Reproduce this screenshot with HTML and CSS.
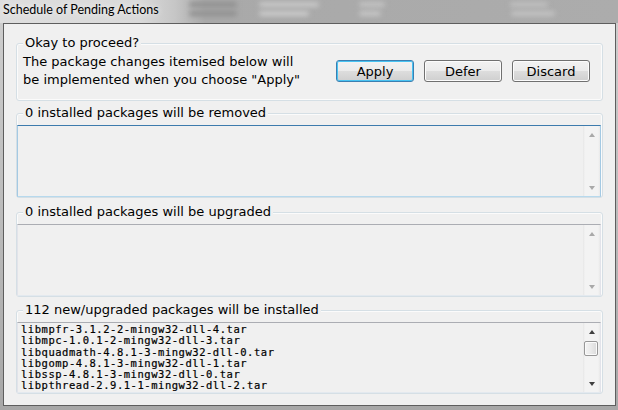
FILE: index.html
```html
<!DOCTYPE html>
<html lang="en">
<head>
<meta charset="utf-8">
<title>Schedule of Pending Actions</title>
<link rel="stylesheet" href="styles.css">
</head>
<body>
<div class="window">
  <div class="titlebar">
    <span class="title">Schedule of Pending Actions</span>
    <div class="ghost">
      <div class="ghost-row">
        <span class="g g-icon"></span>
        <span class="g g-a"></span>
        <span class="g g-b"></span>
        <span class="g g-c"></span>
      </div>
      <div class="ghost-row">
        <span class="g g-icon"></span>
        <span class="g g-a2"></span>
        <span class="g g-b2"></span>
        <span class="g g-c2"></span>
      </div>
    </div>
  </div>
  <div class="client">
    <fieldset class="group group-confirm">
      <legend>Okay to proceed?</legend>
      <div class="confirm-row">
        <p class="confirm-text">The package changes itemised below will<br>be implemented when you choose "Apply"</p>
        <div class="buttons">
          <button class="btn btn-default">Apply</button>
          <button class="btn">Defer</button>
          <button class="btn">Discard</button>
        </div>
      </div>
    </fieldset>

    <fieldset class="group group-removed">
      <legend>0 installed packages will be removed</legend>
      <div class="listbox focused">
        <div class="list-content"></div>
        <div class="scrollbar disabled">
          <div class="sb-btn"><span class="arrow up"></span></div>
          <div class="sb-track"></div>
          <div class="sb-btn"><span class="arrow down"></span></div>
        </div>
      </div>
    </fieldset>

    <fieldset class="group group-upgraded">
      <legend>0 installed packages will be upgraded</legend>
      <div class="listbox">
        <div class="list-content"></div>
        <div class="scrollbar disabled">
          <div class="sb-btn"><span class="arrow up"></span></div>
          <div class="sb-track"></div>
          <div class="sb-btn"><span class="arrow down"></span></div>
        </div>
      </div>
    </fieldset>

    <fieldset class="group group-installed">
      <legend>112 new/upgraded packages will be installed</legend>
      <div class="listbox listbox-short">
        <div class="list-content mono">
          <div class="item">libmpfr-3.1.2-2-mingw32-dll-4.tar</div>
          <div class="item">libmpc-1.0.1-2-mingw32-dll-3.tar</div>
          <div class="item">libquadmath-4.8.1-3-mingw32-dll-0.tar</div>
          <div class="item">libgomp-4.8.1-3-mingw32-dll-1.tar</div>
          <div class="item">libssp-4.8.1-3-mingw32-dll-0.tar</div>
          <div class="item">libpthread-2.9.1-1-mingw32-dll-2.tar</div>
        </div>
        <div class="scrollbar">
          <div class="sb-btn"><span class="arrow up"></span></div>
          <div class="sb-track"><div class="sb-thumb"></div></div>
          <div class="sb-btn"><span class="arrow down"></span></div>
        </div>
      </div>
    </fieldset>
  </div>
</div>
</body>
</html>
```

FILE: styles.css
```css
html, body {
  margin: 0;
  padding: 0;
}

body {
  width: 618px;
  height: 410px;
  overflow: hidden;
  background: #b4b4b4;
  font-family: "DejaVu Sans", Verdana, sans-serif;
}

.window {
  width: 618px;
  height: 410px;
  display: flex;
  flex-direction: column;
  background: linear-gradient(to bottom, #cfcfcf 0, #bdbdbd 200px, #a7a7a7 100%);
}

/* ---------- title bar (Aero glass) ---------- */
.titlebar {
  height: 23px;
  flex: none;
  display: flex;
  align-items: flex-start;
  background: linear-gradient(to right, #dedede 0, #d9d9d9 140px, #c6c6c6 175px, #a9a9a9 205px, #acacac 100%);
  overflow: hidden;
}

.title {
  padding: 2px 0 0 3px;
  font-family: Lato, "Open Sans", sans-serif;
  font-size: 12.5px;
  color: #000;
  white-space: nowrap;
  text-shadow: 0 0 6px rgba(255, 255, 255, 0.9);
}

.ghost {
  flex: 1;
  display: flex;
  flex-direction: column;
  gap: 2px;
  padding: 1px 0 0 30px;
}

.ghost-row {
  display: flex;
  height: 7px;
}

.g {
  display: block;
  height: 5px;
  margin-top: 1px;
  border-radius: 3px;
  filter: blur(2.5px);
  background: #8a8a8a;
}

.g-icon { width: 48px; margin-right: 22px; background: #8f8f8f; }
.g-a { width: 60px; margin-right: 40px; background: #c9c9c9; }
.g-b { width: 26px; margin-right: 125px; background: #c4c4c4; }
.g-c { width: 38px; background: #c0c0c0; }
.g-a2 { width: 50px; margin-right: 50px; background: #cccccc; }
.g-b2 { width: 22px; margin-right: 130px; background: #c7c7c7; }
.g-c2 { width: 44px; background: #c3c3c3; }

/* ---------- client area ---------- */
.client {
  box-sizing: border-box;
  width: 613px;
  height: 383px;
  margin-left: 3px;
  border: 1px solid #5e5e5e;
  background: #f0f0f0;
  padding: 11px 12px 0 12px;
}

.group {
  margin: 0;
  padding: 0 1px 0 0;
  min-width: 0;
  border: 1px solid #d5dfe5;
  border-radius: 3px;
  box-shadow: inset 0 0 0 1px #fbfbfb;
}

.group legend {
  margin-left: 6px;
  padding: 0 2px;
  height: 16px;
  font-size: 13px;
  line-height: 16px;
  color: #000;
  background: #f0f0f0;
}

.group-removed { margin-top: 4px; }
.group-upgraded { margin-top: 6px; }
.group-installed { margin-top: 5px; }

/* ---------- confirm group ---------- */
.confirm-row {
  display: flex;
  align-items: center;
  justify-content: space-between;
  padding: 2px 0 11px 6px;
}

.confirm-text {
  margin: 0;
  font-size: 13px;
  line-height: 18px;
  color: #000;
  white-space: nowrap;
}

.buttons {
  display: flex;
  gap: 10px;
  margin-right: 11px;
}

.btn {
  box-sizing: border-box;
  width: 78px;
  height: 22px;
  padding: 0;
  border: 1px solid #707070;
  border-radius: 3px;
  background: linear-gradient(to bottom, #f2f2f2 0, #ebebeb 50%, #dddddd 51%, #cfcfcf 100%);
  box-shadow: inset 0 0 0 1px #fcfcfc;
  font-family: "DejaVu Sans", Verdana, sans-serif;
  font-size: 13px;
  color: #000;
}

.btn-default {
  border-color: #3c7fb1;
  box-shadow: inset 0 0 0 1px #48c3f2;
}

/* ---------- list boxes ---------- */
.listbox {
  box-sizing: border-box;
  height: 72px;
  margin-top: 4px;
  display: flex;
  border: 1px solid #e2e3ea;
  border-top-color: #abadb3;
  border-bottom-color: #e3e9ef;
  background: #f0f0f0;
}

.listbox.focused {
  border-color: #a4c9e3;
  border-top-color: #3d7bad;
  border-bottom-color: #b7d9ed;
}

.listbox-short { height: 71px; }

.list-content {
  flex: 1;
  overflow: hidden;
}

.mono {
  padding: 1px 0 0 3px;
  font-family: "DejaVu Sans Mono", "Liberation Mono", monospace;
  font-size: 10.5px;
  letter-spacing: 0.53px;
  line-height: 11.3px;
  color: #000;
  -webkit-text-stroke: 0.2px #000;
}

.item {
  white-space: nowrap;
}

.scrollbar {
  width: 17px;
  flex: none;
  display: flex;
  flex-direction: column;
  background: linear-gradient(to right, #e6e6e6 0, #f3f3f3 2px, #f3f3f3 15px, #e9e9e9 100%);
}

.sb-btn {
  height: 17px;
  flex: none;
  display: flex;
  align-items: center;
  justify-content: center;
}

.sb-track {
  flex: 1;
  padding-left: 1px;
}

.sb-thumb {
  box-sizing: border-box;
  width: 14px;
  height: 15px;
  margin-top: 1px;
  border: 1px solid #979797;
  border-radius: 2px;
  background: linear-gradient(to right, #f4f4f4 0, #e9e9e9 50%, #dadada 100%);
  box-shadow: inset 0 0 0 1px #fafafa;
}

.arrow {
  width: 0;
  height: 0;
  border-left: 3.5px solid transparent;
  border-right: 3.5px solid transparent;
}

.arrow.up { border-bottom: 4px solid #3f3f3f; }
.arrow.down { border-top: 4px solid #3f3f3f; }

.scrollbar.disabled .arrow.up { border-bottom-color: #a9a9a9; }
.scrollbar.disabled .arrow.down { border-top-color: #a9a9a9; }
```
